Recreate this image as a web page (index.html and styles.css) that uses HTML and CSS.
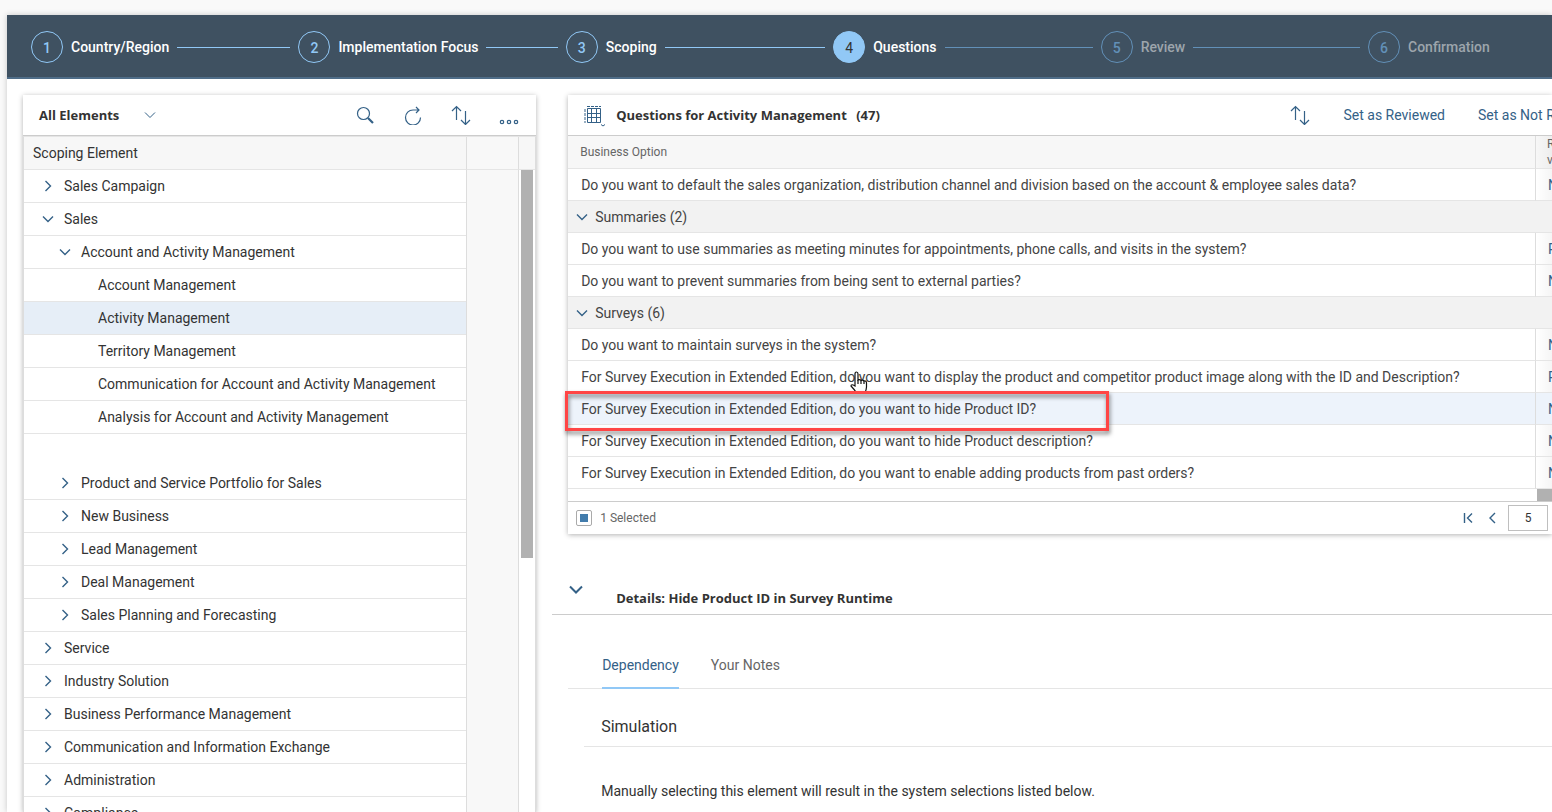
FILE: index.html
```
<!DOCTYPE html>
<html lang="en">
<head>
    <meta charset="UTF-8">
    <meta name="viewport" content="width=device-width, initial-scale=1.0">
    <title>Edit Project Scope - Questions</title>
    <link rel="stylesheet" href="styles.css">
</head>
<body>
    <!-- shared icons -->
    <svg class="defs" aria-hidden="true">
        <symbol id="right" viewBox="0 0 16 16"><path d="M5.500 3l5 5-5 5"/></symbol>
        <symbol id="down" viewBox="0 0 16 16"><path d="M3 5.500l5 5 5-5"/></symbol>
        <symbol id="left" viewBox="0 0 16 16"><path d="M11 3l-5 5 5 5"/></symbol>
        <symbol id="first" viewBox="0 0 16 16"><path d="M4.500 3v10M12 3.500L7.500 8l4.500 4.500"/></symbol>
        <symbol id="sort" viewBox="0 0 20 20"><path d="M5.500 15V2M1 6l4.500-4.500L10 6M14.500 6v13M10 15l4.500 4.500L19 15"/></symbol>
    </svg>

    <div class="shell">
        <nav class="wizard">
            <div class="step done"><span class="num">1</span><span>Country/Region</span></div>
            <div class="step done"><span class="num">2</span><span>Implementation Focus</span></div>
            <div class="step done"><span class="num">3</span><span>Scoping</span></div>
            <div class="step current"><span class="num">4</span><span>Questions</span></div>
            <div class="step"><span class="num">5</span><span>Review</span></div>
            <div class="step"><span class="num">6</span><span>Confirmation</span></div>
        </nav>

        <div class="content">
            <section class="card elements">
                <div class="toolbar">
                    <button class="variant">All Elements <svg class="thin"><use href="#down"/></svg></button>
                    <div class="tools">
                        <button aria-label="Search"><svg viewBox="0 0 20 20"><circle cx="8.500" cy="8.500" r="6"/><path d="M13 13l5 5" stroke-width="2.200"/></svg></button>
                        <button aria-label="Refresh"><svg viewBox="0 0 20 20"><path d="M15.500 5H10a7.500 7.500 0 1 0 7.500 7.500M13 2l3 3-3 3"/></svg></button>
                        <button aria-label="Sort"><svg><use href="#sort"/></svg></button>
                        <button aria-label="More"><svg viewBox="0 0 20 20"><circle cx="3" cy="17" r="1.700"/><circle cx="10" cy="17" r="1.700"/><circle cx="17" cy="17" r="1.700"/></svg></button>
                    </div>
                </div>
                <table class="tree">
                    <thead>
                        <tr><th>Scoping Element</th><th class="side"></th><th class="track"></th></tr>
                    </thead>
                    <tbody>
                        <tr><td><svg><use href="#right"/></svg>Sales Campaign</td><td class="side" rowspan="20"></td><td class="track" rowspan="20"><div class="thumb"></div></td></tr>
                        <tr><td><svg><use href="#down"/></svg>Sales</td></tr>
                        <tr><td class="l2"><svg><use href="#down"/></svg>Account and Activity Management</td></tr>
                        <tr><td class="l3">Account Management</td></tr>
                        <tr class="selected"><td class="l3">Activity Management</td></tr>
                        <tr><td class="l3">Territory Management</td></tr>
                        <tr><td class="l3">Communication for Account and Activity Management</td></tr>
                        <tr><td class="l3">Analysis for Account and Activity Management</td></tr>
                        <tr><td class="blank"></td></tr>
                        <tr><td class="l2"><svg><use href="#right"/></svg>Product and Service Portfolio for Sales</td></tr>
                        <tr><td class="l2"><svg><use href="#right"/></svg>New Business</td></tr>
                        <tr><td class="l2"><svg><use href="#right"/></svg>Lead Management</td></tr>
                        <tr><td class="l2"><svg><use href="#right"/></svg>Deal Management</td></tr>
                        <tr><td class="l2"><svg><use href="#right"/></svg>Sales Planning and Forecasting</td></tr>
                        <tr><td><svg><use href="#right"/></svg>Service</td></tr>
                        <tr><td><svg><use href="#right"/></svg>Industry Solution</td></tr>
                        <tr><td><svg><use href="#right"/></svg>Business Performance Management</td></tr>
                        <tr><td><svg><use href="#right"/></svg>Communication and Information Exchange</td></tr>
                        <tr><td><svg><use href="#right"/></svg>Administration</td></tr>
                        <tr><td><svg><use href="#right"/></svg>Compliance</td></tr>
                    </tbody>
                </table>
            </section>

            <div class="main">
                <section class="card">
                    <div class="toolbar">
                        <button class="view" aria-label="Table view">
                            <svg viewBox="0 0 24 24"><path d="M6.500 5.500h13v14h-13zM6.500 10.500h13M6.500 14.500h13M10.500 5.500v14M15.500 5.500v14"/><path d="M4 6v14M6 3.500h14" stroke-dasharray="3 1"/><path d="M20 21.500l2 1.500 2-1.500"/></svg>
                        </button>
                        <h2>Questions for Activity Management <span>(47)</span></h2>
                        <div class="actions">
                            <button aria-label="Sort"><svg><use href="#sort"/></svg></button>
                            <button class="reviewed">Set as Reviewed</button>
                            <button class="not-reviewed">Set as Not Reviewed</button>
                        </div>
                    </div>
                    <table class="questions">
                        <thead>
                            <tr><th>Business Option</th><th class="rel">Re<br>vi</th></tr>
                        </thead>
                        <tbody>
                            <tr><td>Do you want to default the sales organization, distribution channel and division based on the account &amp; employee sales data?</td><td class="rel">No</td></tr>
                            <tr class="group"><td colspan="2"><svg><use href="#down"/></svg>Summaries (2)</td></tr>
                            <tr><td>Do you want to use summaries as meeting minutes for appointments, phone calls, and visits in the system?</td><td class="rel">Re</td></tr>
                            <tr><td>Do you want to prevent summaries from being sent to external parties?</td><td class="rel">No</td></tr>
                            <tr class="group"><td colspan="2"><svg><use href="#down"/></svg>Surveys (6)</td></tr>
                            <tr><td>Do you want to maintain surveys in the system?</td><td class="rel">No</td></tr>
                            <tr><td>For Survey Execution in Extended Edition, do you want to display the product and competitor product image along with the ID and Description?
                                <svg class="pointer" viewBox="0 0 20 24"><path d="M6 13V3q0-2 1.500-2T9 3v6q2-1 3 .500 2-1 3 .500 2.500-.500 2.500 2v4q0 3-2 6.500H8Q5 18 2 15q0-2.500 4 0z"/><path d="M9 9v4M12 9.500V13M15 10v3"/></svg></td><td class="rel">Re</td></tr>
                            <tr class="selected"><td><span class="marker"></span>For Survey Execution in Extended Edition, do you want to hide Product ID?</td><td class="rel">No</td></tr>
                            <tr><td>For Survey Execution in Extended Edition, do you want to hide Product description?</td><td class="rel">No</td></tr>
                            <tr><td>For Survey Execution in Extended Edition, do you want to enable adding products from past orders?</td><td class="rel">No</td></tr>
                        </tbody>
                    </table>
                    <div class="hscroll"><div></div></div>
                    <div class="footer">
                        <label><input type="checkbox" checked>1 Selected</label>
                        <div class="pager">
                            <button aria-label="First page"><svg><use href="#first"/></svg></button>
                            <button aria-label="Previous page"><svg><use href="#left"/></svg></button>
                            <input type="text" value="5" aria-label="Page">
                        </div>
                    </div>
                </section>

                <section class="details">
                    <div class="details-head">
                        <button aria-label="Collapse"><svg viewBox="0 0 16 16"><path d="M2 4.500l6 6 6-6"/></svg></button>
                        <h2>Details: Hide Product ID in Survey Runtime</h2>
                    </div>
                    <div class="tabs">
                        <button class="active">Dependency</button>
                        <button>Your Notes</button>
                    </div>
                    <h3>Simulation</h3>
                    <p>Manually selecting this element will result in the system selections listed below.</p>
                </section>
            </div>
        </div>
    </div>
</body>
</html>
```
FILE: styles.css
```
:root {
    --blue: #346187;
    --light-blue: #91c8f6;
    --text: #333;
    --line: #e5e5e5;
    --dark-line: #ccc;
}

* {
    box-sizing: border-box;
}

body {
    margin: 0;
    padding: 15px 0 0 7px;
    height: 100vh;
    overflow: hidden;
    background: #f9f9f9;
    color: var(--text);
    font-family: Roboto, sans-serif;
    font-size: 14px;
    line-height: 20px;
}

button {
    font: inherit;
    color: var(--blue);
    background: none;
    border: none;
    padding: 0;
    white-space: nowrap;
    cursor: pointer;
}

svg {
    display: block;
    width: 16px;
    height: 16px;
    flex: none;
    fill: none;
    stroke: var(--blue);
    stroke-width: 1.4;
}

.defs {
    position: absolute;
    width: 0;
    height: 0;
}

h2, h3, p {
    margin: 0;
}

h2, .variant {
    font-family: "Open Sans", sans-serif;
    font-size: 13px;
    font-weight: bold;
}

.shell {
    height: 100%;
    background: #fff;
    box-shadow: 0 0 6px rgba(0, 0, 0, 0.2);
}

/* wizard */
.wizard {
    display: flex;
    height: 64px;
    padding: 16px 0 14px 24px;
    background: #3f5161;
    border-bottom: 2px solid #4f6d88;
}

.step {
    flex: 1;
    display: flex;
    align-items: center;
    gap: 8px;
    height: 32px;
    color: #9da5ac;
    font-weight: 500;
    line-height: 32px;
    white-space: nowrap;
}

.step::after {
    content: "";
    flex: 1;
    height: 1px;
    margin-right: 8px;
    background: #6290b8;
}

.step:last-child {
    flex: 0 0 184px;
}

.step:last-child::after {
    display: none;
}

.num {
    width: 32px;
    height: 32px;
    border: 1px solid #6290b8;
    border-radius: 50%;
    color: #6290b8;
    text-align: center;
}

.done, .current {
    color: #fff;
}

.done .num {
    border-color: var(--light-blue);
    color: var(--light-blue);
}

.done::after {
    background: var(--light-blue);
}

.current .num {
    background: var(--light-blue);
    border-color: var(--light-blue);
    color: var(--text);
    font-weight: normal;
}

/* layout */
.content {
    display: flex;
    gap: 16px;
    height: calc(100% - 64px);
    padding: 16px 0 0 16px;
    overflow: hidden;
}

.card {
    background: #fff;
    box-shadow: 0 1px 5px rgba(0, 0, 0, 0.3);
}

.toolbar {
    display: flex;
    align-items: center;
    height: 41px;
    border-bottom: 1px solid var(--dark-line);
}

.elements {
    flex: 0 0 calc(33vw + 1px);
}

.main {
    flex: 1;
    min-width: 0;
}

.main .card {
    margin-left: 16px;
}

.variant {
    display: flex;
    align-items: center;
    gap: 23px;
    margin-left: 16px;
    color: var(--text);
}

.thin {
    stroke-width: 1;
}

.tools {
    display: flex;
    gap: 28px;
    margin: 0 17px 0 auto;
}

.tools svg, .actions svg {
    width: 20px;
    height: 20px;
    stroke-width: 1.2;
}

/* tree */
table {
    width: 100%;
    border-spacing: 0;
    table-layout: fixed;
}

th, td {
    padding: 0;
    border-bottom: 1px solid var(--line);
    text-align: left;
    font-weight: normal;
    white-space: nowrap;
}

th {
    background: #f7f7f7;
}

.tree {
    border: 1px solid #ddd;
    border-top-color: var(--line);
}

.tree td, .tree th {
    height: 33px;
}

.tree th {
    padding-left: 9px;
}

.tree td {
    padding-left: 40px;
}

.tree svg {
    float: left;
    margin: 2px 8px 0 -24px;
}

.tree td.l2 {
    padding-left: 57px;
}

.tree td.l3 {
    padding-left: 74px;
}

.tree .selected td {
    background: #e6eef7;
}

.tree .blank {
    border-bottom: none;
}

.tree .side {
    width: 52px;
    padding: 0;
    border-left: 1px solid #ddd;
    background: #f8f8f8;
}

.tree .track {
    width: 17px;
    padding: 0 0 0 2px;
    border-left: 1px solid #ddd;
    vertical-align: top;
}

.thumb {
    width: 12px;
    height: 388px;
    background: #b1b1b1;
}

/* questions */
.view {
    margin: 0 11px 0 13px;
}

.view svg {
    width: 24px;
    height: 24px;
    stroke-width: 1;
}

.toolbar h2 span {
    margin-left: 6px;
}

.actions {
    display: flex;
    align-items: center;
    gap: 33px;
    margin-left: auto;
}

.not-reviewed {
    width: 74px;
    overflow: hidden;
    text-align: left;
}

.questions th {
    height: 33px;
    padding-left: 12px;
    border-right: 1px solid #ddd;
    color: #666;
    font-size: 12px;
    line-height: 16px;
}

.questions td {
    position: relative;
    height: 32px;
    padding-left: 13px;
    color: #444;
}

.questions .group td {
    padding-left: 26px;
    background: #f2f2f2;
}

.group svg {
    float: left;
    margin: 2px 5px 0 -20px;
}

.questions .selected td {
    background: #edf3fb;
}

.questions .rel {
    width: 17px;
    padding-left: 12px;
    border-left: 1px solid #ddd;
    border-right: none;
    background-image: linear-gradient(to right, rgba(0, 0, 0, 0), rgba(0, 0, 0, 0.04));
    color: var(--blue);
    overflow: hidden;
}

.questions th.rel {
    padding-left: 11px;
    color: #666;
}

.questions th:first-child {
    border-right: none;
}

.marker {
    position: absolute;
    z-index: 2;
    left: -3px;
    top: -2px;
    width: 544px;
    height: 40px;
    border: 3px solid #ff4545;
    filter: drop-shadow(1px 3px 2px rgba(0, 0, 0, 0.5));
}

.pointer {
    position: absolute;
    left: 281px;
    top: 10px;
    z-index: 1;
    width: 20px;
    height: 24px;
    fill: #fff;
    stroke: #111;
    stroke-width: 1.2;
}

.hscroll {
    height: 12px;
}

.hscroll div {
    width: 15px;
    height: 12px;
    margin-left: auto;
    background: #b1b1b1;
}

.footer {
    display: flex;
    align-items: center;
    justify-content: space-between;
    height: 33px;
    padding: 0 4px 0 8px;
    border-top: 1px solid var(--dark-line);
    font-size: 12px;
}

.footer label {
    display: flex;
    align-items: center;
    gap: 8px;
    color: #666;
}

.footer [type="checkbox"] {
    appearance: none;
    width: 16px;
    height: 16px;
    margin: 0;
    padding: 3px;
    border: 1px solid #aaa;
    border-radius: 2px;
    background: #427cac content-box;
}

.pager {
    display: flex;
    align-items: center;
    gap: 8px;
}

.pager input {
    width: 40px;
    height: 26px;
    padding: 0;
    border: 1px solid #bfbfbf;
    color: var(--text);
    font: inherit;
    text-align: center;
}

/* details */
.details-head {
    display: flex;
    align-items: flex-end;
    gap: 32px;
    height: 81px;
    padding: 0 0 6px 16px;
    border-bottom: 1px solid var(--dark-line);
}

.details-head svg {
    margin-bottom: 10px;
    stroke-width: 2;
}

.tabs {
    display: flex;
    gap: 32px;
    height: 74px;
    margin-left: 16px;
    padding-left: 34px;
    border-bottom: 1px solid var(--line);
}

.tabs button {
    height: 74px;
    padding-top: 28px;
    color: #666;
    border-bottom: 2px solid transparent;
}

.tabs .active {
    color: var(--blue);
    border-bottom-color: var(--light-blue);
}

.details h3 {
    height: 58px;
    margin-left: 32px;
    padding: 28px 0 0 17px;
    border-bottom: 1px solid var(--line);
    font-size: 16px;
    font-weight: normal;
}

.details p {
    margin: 34px 0 0 49px;
}
```
